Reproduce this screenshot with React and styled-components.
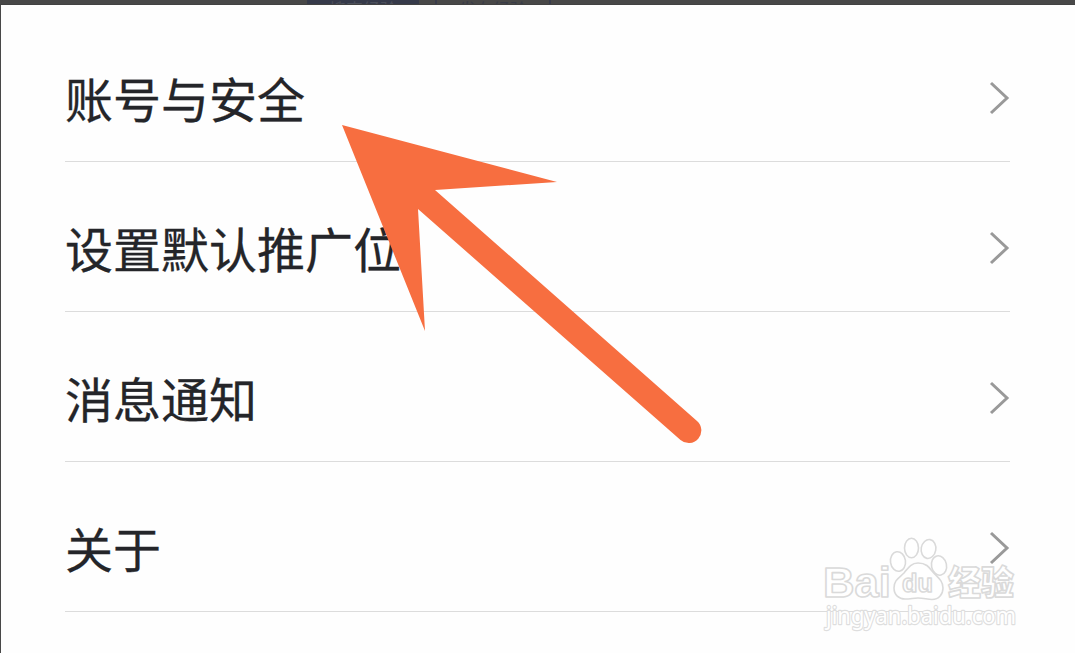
import React from "react";
import styled, { createGlobalStyle } from "styled-components";

const GlobalStyle = createGlobalStyle`
  * { box-sizing: border-box; }
  body {
    margin: 0;
    background: #484848;
    font-family: "Noto Sans CJK SC", sans-serif;
  }
`;

const Screen = styled.div`
  position: relative;
  width: 1075px;
  height: 653px;
  overflow: hidden;
  display: flex;
  flex-direction: column;
  background: #484848;
`;

const Backdrop = styled.div`
  height: 5px;
  flex: none;
  display: flex;
  gap: 16px;
  padding-left: 307px;
  overflow: hidden;
  border-bottom: 1px solid #424242;
`;

const BackdropTab = styled.div`
  flex: none;
  width: ${(p) => (p.$active ? 112 : 116)}px;
  height: 30px;
  text-align: center;
  font-size: 17px;
  line-height: 17px;
  color: ${(p) => (p.$active ? "#4c505b" : "#393c48")};
  background: ${(p) => (p.$active ? "#363a4a" : "transparent")};
  border: solid #393c4b;
  border-width: ${(p) => (p.$active ? "0" : "0 2px")};
`;

const Panel = styled.main`
  flex: 1;
  margin-left: 1px;
  padding: 7px 65px 0 64px;
  background: #fefefe;
`;

const List = styled.ul`
  margin: 0;
  padding: 0;
  list-style: none;
`;

const Row = styled.li`
  height: 150px;
  display: flex;
  align-items: center;
  justify-content: space-between;
  padding-top: 24px;
  border-bottom: 1px solid #dcdcdc;
`;

const Label = styled.span`
  font-size: 48px;
  line-height: 70px;
  color: #242529;
  -webkit-text-stroke: 0.3px #242529;
  padding-bottom: 4px;
`;

const Chevron = styled.svg`
  width: 22px;
  height: 36px;
  flex: none;
  margin-bottom: 1px;
  fill: none;
  stroke: #999;
  stroke-width: 3;
`;

const Overlay = styled.svg`
  position: absolute;
  inset: 0;
  pointer-events: none;
`;

const WatermarkGroup = styled.g`
  fill: #fff;
  stroke: #dadada;
  stroke-width: 1.6;
  stroke-linejoin: round;
`;

const PawShape = styled.g`
  fill: rgba(255, 255, 255, 0.7);
`;

const Wordmark = styled.text`
  font-family: ${(p) => (p.$cjk ? '"Noto Sans CJK SC"' : '"Liberation Sans"')}, sans-serif;
  font-weight: ${(p) => (p.$cjk ? 900 : 700)};
  font-size: ${(p) => p.$size}px;
`;

const SiteAddress = styled.text`
  font-family: "Noto Sans", sans-serif;
  font-size: 23.5px;
  stroke: #dedede;
  stroke-width: 2.4px;
  paint-order: stroke;
`;

const items = ["账号与安全", "设置默认推广位", "消息通知", "关于"];

function Arrow() {
  return (
    <path
      fill="#f76e40"
      d="M342 125 557 182 435 190 697 421 A12.5 12.5 0 0 1 680.5 440 L418 209 425 331Z"
    />
  );
}

function Watermark() {
  return (
    <WatermarkGroup>
      <PawShape>
        <ellipse cx="898" cy="561.5" rx="7.5" ry="9.8" transform="rotate(-8 898 561.5)" />
        <ellipse cx="911.5" cy="548" rx="7" ry="9.7" />
        <ellipse cx="928.5" cy="549" rx="7.3" ry="9.5" transform="rotate(10 928.5 549)" />
        <ellipse cx="939" cy="565.5" rx="7.5" ry="9.8" transform="rotate(-12 939 565.5)" />
        <path d="M918 563C911 563 908 568 904 573C899 578 894 580 894 588C894 595 899 599 905 599C911 599 913 598 918 598C924 598 927 599.5 932 599.5C939 599.5 943 594 943 588C943 580 937 577 932 571C929 567 926 563 918 563Z" />
      </PawShape>
      <Wordmark $size={43} x="823" y="597" textLength="68" lengthAdjust="spacingAndGlyphs">Bai</Wordmark>
      <Wordmark $size={26} x="902" y="592" textLength="31" lengthAdjust="spacingAndGlyphs">du</Wordmark>
      <Wordmark $cjk $size={34} x="948" y="595" textLength="66" lengthAdjust="spacingAndGlyphs">经验</Wordmark>
      <SiteAddress x="826" y="623.5" textLength="190" lengthAdjust="spacingAndGlyphs">jingyan.baidu.com</SiteAddress>
    </WatermarkGroup>
  );
}

export default function App() {
  return (
    <>
      <GlobalStyle />
      <Screen>
        <Backdrop>
          <BackdropTab $active>搜索经验</BackdropTab>
          <BackdropTab>发布经验</BackdropTab>
        </Backdrop>
        <Panel>
          <List>
            {items.map((item) => (
              <Row key={item}>
                <Label>{item}</Label>
                <Chevron viewBox="0 0 22 36">
                  <path d="M3 3 19 18 3 33" />
                </Chevron>
              </Row>
            ))}
          </List>
        </Panel>
        <Overlay width="1075" height="653" viewBox="0 0 1075 653">
          <Arrow />
          <Watermark />
        </Overlay>
      </Screen>
    </>
  );
}
